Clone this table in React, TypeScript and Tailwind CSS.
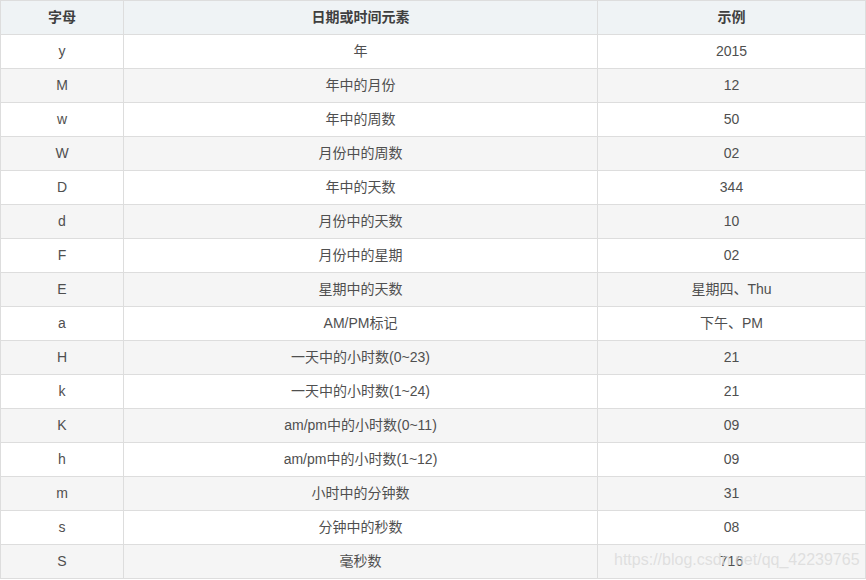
const rows: [string, string, string][] = [
  ['y', '年', '2015'],
  ['M', '年中的月份', '12'],
  ['w', '年中的周数', '50'],
  ['W', '月份中的周数', '02'],
  ['D', '年中的天数', '344'],
  ['d', '月份中的天数', '10'],
  ['F', '月份中的星期', '02'],
  ['E', '星期中的天数', '星期四、Thu'],
  ['a', 'AM/PM标记', '下午、PM'],
  ['H', '一天中的小时数(0~23)', '21'],
  ['k', '一天中的小时数(1~24)', '21'],
  ['K', 'am/pm中的小时数(0~11)', '09'],
  ['h', 'am/pm中的小时数(1~12)', '09'],
  ['m', '小时中的分钟数', '31'],
  ['s', '分钟中的秒数', '08'],
  ['S', '毫秒数', '716'],
]

export default function App() {
  return (
    <div
      className="relative w-[866px] h-[580px] bg-white"
      style={{ fontFamily: '"Liberation Sans", "Noto Sans CJK SC", sans-serif' }}
    >
      <table className="w-[865px] table-fixed border-collapse text-[14px] text-[#4f4f4f]">
        <colgroup>
          <col className="w-[123px]" />
          <col className="w-[474px]" />
          <col className="w-[268px]" />
        </colgroup>
        <thead>
          <tr className="h-[34px] bg-[#eff3f5]">
            <th className="border border-[#dddddd] font-bold text-[#3f3f3f] text-center">字母</th>
            <th className="border border-[#dddddd] font-bold text-[#3f3f3f] text-center">日期或时间元素</th>
            <th className="border border-[#dddddd] font-bold text-[#3f3f3f] text-center">示例</th>
          </tr>
        </thead>
        <tbody>
          {rows.map((r, i) => (
            <tr key={i} className={`h-[34px] ${i % 2 === 1 ? 'bg-[#f5f5f5]' : 'bg-white'}`}>
              <td className="border border-[#dddddd] text-center">{r[0]}</td>
              <td className="border border-[#dddddd] text-center">{r[1]}</td>
              <td className="border border-[#dddddd] text-center">{r[2]}</td>
            </tr>
          ))}
        </tbody>
      </table>

      {/* csdn watermark */}
      <div className="absolute left-[614px] top-[551px] text-[16px] leading-[18px] text-[#d9d9d9]/80 whitespace-nowrap pointer-events-none">
        https://blog.csdn.net/qq_42239765
      </div>
    </div>
  )
}
